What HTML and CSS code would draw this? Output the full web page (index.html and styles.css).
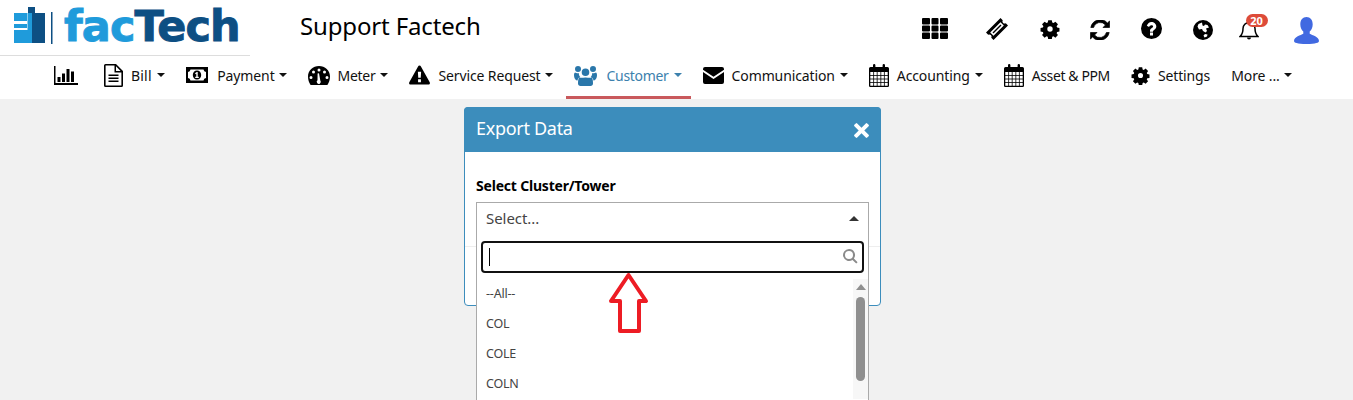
FILE: index.html
```html
<!DOCTYPE html>
<html lang="en">
<head>
<meta charset="utf-8">
<title>Support Factech</title>
<link rel="stylesheet" href="styles.css">
</head>
<body>
<svg class="defs" width="0" height="0" aria-hidden="true">
  <symbol id="i-cog" viewBox="0 0 24 24"><path fill-rule="evenodd" d="M9.600 1h4.800l.6 3.100 1.600.7 2.600-1.800 3.400 3.400-1.800 2.600.7 1.600 3.100.6v4.800l-3.100.6-.7 1.600 1.800 2.600-3.400 3.400-2.600-1.800-1.600.7-.6 3.100H9.600L9 23.100 7.400 22.400 4.800 24.200 1.400 20.800 3.200 18.200 2.500 16.600-.6 16V11.200L2.500 10.600 3.200 9 1.400 6.400 4.800 3 7.400 4.800 9 4.100zM12 9a3.600 3.600 0 1 0 0 7.200A3.600 3.600 0 0 0 12 9z" transform="translate(1.200 .6) scale(.9)"/></symbol>
  <symbol id="i-cal" viewBox="0 0 20 23"><path d="M1.500 3H4V1.200a1.200 1.200 0 0 1 2.400 0V3h7.200V1.200a1.200 1.200 0 0 1 2.400 0V3h2.500A1.500 1.500 0 0 1 20 4.500V8H0V4.500A1.500 1.500 0 0 1 1.500 3z"/><path fill="none" stroke="#000" stroke-width="1.300" d="M.65 7v14.700a.65.650 0 0 0 .65.650h17.400a.65.650 0 0 0 .65-.65V7"/><path fill="none" stroke="#000" stroke-width=".8" d="M1 11.500h18M1 15h18M1 18.500h18M4.600 8v14M8.200 8v14M11.800 8v14M15.400 8v14"/></symbol>
</svg>

<header class="topbar">
  <div class="brand">
    <svg class="brand-mark" viewBox="0 0 40 38" aria-hidden="true">
      <path fill="#1f9bdb" d="M0 6h13v8H0zM0 17h13v4H0zM0 23h14v13H0zM13.500 6H18v30h-4.500z"/>
      <path fill="#0d4f83" d="M14 0h7v6h10v30H18V6h-4z"/>
      <path fill="#0d4f83" d="M37 5h1.500v32H37z"/>
    </svg>
    <span class="brand-name"><span class="brand-fac">fac</span><span class="brand-tech">Tech</span></span>
  </div>
  <h1 class="page-title">Support Factech</h1>
  <div class="tools">
    <svg class="tool tool-grid" viewBox="0 0 26 21" aria-hidden="true"><path d="M0 1a1 1 0 0 1 1-1h6a1 1 0 0 1 1 1v4.500a1 1 0 0 1-1 1H1a1 1 0 0 1-1-1zM9.500 1a1 1 0 0 1 1-1h5a1 1 0 0 1 1 1v4.500a1 1 0 0 1-1 1h-5a1 1 0 0 1-1-1zM18 1a1 1 0 0 1 1-1h6a1 1 0 0 1 1 1v4.500a1 1 0 0 1-1 1h-6a1 1 0 0 1-1-1zM0 8.500a1 1 0 0 1 1-1h6a1 1 0 0 1 1 1v4a1 1 0 0 1-1 1H1a1 1 0 0 1-1-1zM9.500 8.500a1 1 0 0 1 1-1h5a1 1 0 0 1 1 1v4a1 1 0 0 1-1 1h-5a1 1 0 0 1-1-1zM18 8.500a1 1 0 0 1 1-1h6a1 1 0 0 1 1 1v4a1 1 0 0 1-1 1h-6a1 1 0 0 1-1-1zM0 15.500a1 1 0 0 1 1-1h6a1 1 0 0 1 1 1V20a1 1 0 0 1-1 1H1a1 1 0 0 1-1-1zM9.500 15.500a1 1 0 0 1 1-1h5a1 1 0 0 1 1 1V20a1 1 0 0 1-1 1h-5a1 1 0 0 1-1-1zM18 15.500a1 1 0 0 1 1-1h6a1 1 0 0 1 1 1V20a1 1 0 0 1-1 1h-6a1 1 0 0 1-1-1z"/></svg>
    <svg class="tool tool-ticket" viewBox="0 0 22 22" aria-hidden="true"><path fill-rule="evenodd" d="M14.500 0l2.200 2.200a2.300 2.300 0 0 0 3.100 3.100L22 7.500 7.500 22l-2.200-2.200a2.300 2.300 0 0 0-3.100-3.100L0 14.500zM14.500 4.200L4.200 14.500l3.300 3.300L17.800 7.500z"/><path d="M14.500 6.500l1 1-8 8-1-1z"/></svg>
    <svg class="tool tool-cog"><use href="#i-cog"/></svg>
    <svg class="tool tool-refresh" viewBox="0 0 20 20" aria-hidden="true"><path stroke="#000" stroke-width=".7" d="M19.500 1v6.500H13l2.500-2.500A6.800 6.800 0 0 0 3.600 7.500H.8A9.600 9.600 0 0 1 17.400 3zM.5 19v-6.500H7L4.500 15a6.800 6.800 0 0 0 11.900-2.500h2.800A9.600 9.600 0 0 1 2.600 17z"/></svg>
    <svg class="tool tool-help" viewBox="0 0 21 21" aria-hidden="true"><path fill-rule="evenodd" d="M10.500 0a10.500 10.500 0 1 1 0 21 10.500 10.500 0 0 1 0-21zM9 14.500V17.500h3v-3zM5.800 7.700l2.300 1.300c.4-1 1.200-1.700 2.300-1.700 1 0 1.700.5 1.700 1.300 0 1.500-3.100 1.800-3.100 4.500v.6h3v-.4c0-1.500 3.300-2 3.300-4.900C15.300 5.900 13 4 10.400 4 8.300 4 6.700 5.500 5.800 7.700z"/></svg>
    <svg class="tool tool-globe" viewBox="0 0 20 20" aria-hidden="true"><path fill-rule="evenodd" d="M10 0a10 10 0 1 1 0 20 10 10 0 0 1 0-20zM9 2.500L5.500 4 4.500 6.500 6 9.500 9 9 10 11l2.500 1.500L14 11 13 8.500l3-1L14.500 5 12 4.500 11 6 9.500 5.500zM12 14l-1.500 1.500 1 2 2.500-1 .5-2z"/></svg>
    <span class="tool-bell">
      <svg class="bell" viewBox="0 0 20 22" aria-hidden="true"><path fill="none" stroke="#000" stroke-width="1.500" d="M1 17.500c2.200-2 3-4 3-8a6 6 0 0 1 12 0c0 4 .8 6 3 8z"/><path d="M8 18.500h4a2 2 0 0 1-4 0zM9 1h2v3H9z"/></svg>
      <span class="badge">20</span>
    </span>
    <svg class="tool tool-user" viewBox="0 0 25 27" aria-hidden="true"><path fill="#4169e1" d="M12.500 0c3.800 0 6.200 3 6.200 7.200 0 3-1.200 5.800-3 7.300v2.300c2.500 1.400 9.300 3 9.300 7.200 0 1.600-3 3-12.500 3S0 25.600 0 24c0-4.200 6.800-5.800 9.300-7.200v-2.300c-1.800-1.500-3-4.300-3-7.300C6.300 3 8.700 0 12.500 0z"/></svg>
  </div>
</header>

<nav class="menu">
  <a class="menu-item menu-home"><svg class="ic ic-chart" viewBox="0 0 24 19" aria-hidden="true"><path d="M0 0h1.500v17H24v2H0zM3.500 11h3v5h-3zM8 7.500h3V16H8zM12.500 3h3v13h-3zM17 5.500h3V16h-3z"/></svg></a>
  <a class="menu-item item-bill"><svg class="ic ic-file" viewBox="0 0 19 23" aria-hidden="true"><path fill-rule="evenodd" d="M1.500 0H12l7 7v14.500a1.500 1.500 0 0 1-1.500 1.500h-16A1.500 1.500 0 0 1 0 21.500v-20A1.500 1.500 0 0 1 1.500 0zM1.600 1.600v19.800h15.800V8.500H10.500V1.600zM12 2.300v4.600h4.600zM4.500 10.500h10V12h-10zM4.500 13.500h10V15h-10zM4.500 16.500h10V18h-10z"/></svg><span>Bill</span><i class="caret"></i></a>
  <a class="menu-item item-payment"><svg class="ic ic-money" viewBox="0 0 22 16" aria-hidden="true"><path fill-rule="evenodd" d="M0 0h22v16H0zM4.500 2.500A3 3 0 0 1 2 5v6a3 3 0 0 1 2.500 2.500h13A3 3 0 0 1 20 11V5a3 3 0 0 1-2.500-2.500zM11 3.500c2.500 0 4.200 2 4.200 4.500s-1.700 4.500-4.200 4.500S6.800 10.500 6.800 8 8.500 3.500 11 3.500zM10.800 5L9 6.300l.7 1 .6-.5v3H9.200v1.200h3.600v-1.200h-1.100V5z"/></svg><span>Payment</span><i class="caret"></i></a>
  <a class="menu-item item-meter"><svg class="ic ic-gauge" viewBox="0 0 22 19" aria-hidden="true"><path fill-rule="evenodd" d="M11 0c6 0 11 4.500 11 10.500 0 3-.9 6-2.600 8.500H2.600C.9 16.500 0 13.500 0 10.500 0 4.500 5 0 11 0zM11 2.500a1.500 1.500 0 1 0 0 3 1.500 1.500 0 0 0 0-3zM5.500 4.500a1.500 1.500 0 1 0 0 3 1.500 1.500 0 0 0 0-3zM16.500 4.500a1.500 1.500 0 1 0 0 3 1.500 1.500 0 0 0 0-3zM3 10a1.500 1.500 0 1 0 0 3 1.500 1.500 0 0 0 0-3zM19 10a1.500 1.500 0 1 0 0 3 1.500 1.500 0 0 0 0-3zM9.600 7.500l-.1 6.800a2 2 0 1 0 2.800.3L11 7.300z"/></svg><span>Meter</span><i class="caret"></i></a>
  <a class="menu-item"><svg class="ic ic-warn" viewBox="0 0 22 20" aria-hidden="true"><path fill-rule="evenodd" d="M11 0c.7 0 1.200.4 1.500 1l9.200 16.700c.6 1.100-.1 2.300-1.400 2.300H1.700C.4 20-.3 18.800.3 17.700L9.500 1c.3-.6.8-1 1.500-1zM9.300 6.500l.4 6.500h2.600l.4-6.500zM9.500 14.500v3h3v-3z"/></svg><span>Service Request</span><i class="caret"></i></a>
  <a class="menu-item is-active"><svg class="ic ic-users" viewBox="0 0 23 21" aria-hidden="true"><path d="M11.500 3.500a3.800 3.800 0 1 1 0 7.600 3.800 3.800 0 0 1 0-7.600zM4 1a3 3 0 1 1 0 6 3 3 0 0 1 0-6zM19 1a3 3 0 1 1 0 6 3 3 0 0 1 0-6zM5.500 12.500c1.200.8 3.500 0 6 0s4.800.8 6 0c1.400.8 1.500 4 1.500 6 0 1.500-1 2.500-2.500 2.500h-10C5 21 4 20 4 18.500c0-2 .1-5.200 1.500-6zM0 10c0-1 .3-2 1-2.500 1 .7 2.500.9 3.800.5-.1 1.500.5 3 1.500 4-1.300.3-2.500 1.500-2.800 3.500C1.500 15.500 0 13 0 10zM23 10c0-1-.3-2-1-2.500-1 .7-2.500.9-3.800.5.100 1.500-.5 3-1.500 4 1.300.3 2.500 1.500 2.800 3.500C21.500 15.500 23 13 23 10z"/></svg><span>Customer</span><i class="caret"></i></a>
  <a class="menu-item"><svg class="ic ic-mail" viewBox="0 0 21 17" aria-hidden="true"><path d="M2 0h17a2 2 0 0 1 2 2v.8l-10.500 7L0 2.800V2a2 2 0 0 1 2-2zM0 5l10.500 7L21 5v10a2 2 0 0 1-2 2H2a2 2 0 0 1-2-2z"/></svg><span>Communication</span><i class="caret"></i></a>
  <a class="menu-item"><svg class="ic ic-cal"><use href="#i-cal"/></svg><span>Accounting</span><i class="caret"></i></a>
  <a class="menu-item item-asset"><svg class="ic ic-cal"><use href="#i-cal"/></svg><span>Asset &amp; PPM</span></a>
  <a class="menu-item"><svg class="ic ic-cog"><use href="#i-cog"/></svg><span>Settings</span></a>
  <a class="menu-item item-more"><span>More ...</span><i class="caret"></i></a>
</nav>

<main class="stage">
  <section class="modal">
    <div class="modal-head">
      <h2 class="modal-title">Export Data</h2>
      <svg class="modal-close" viewBox="0 0 15 15" aria-hidden="true"><path d="M3.200.4L7.500 4.700 11.800.4a1 1 0 0 1 1.400 0l1.400 1.400a1 1 0 0 1 0 1.400L10.300 7.500l4.300 4.300a1 1 0 0 1 0 1.400l-1.400 1.400a1 1 0 0 1-1.400 0L7.500 10.300 3.200 14.600a1 1 0 0 1-1.400 0L.4 13.200a1 1 0 0 1 0-1.400L4.700 7.500.4 3.200a1 1 0 0 1 0-1.400L1.800.4a1 1 0 0 1 1.400 0z"/></svg>
    </div>
    <div class="modal-body">
      <label class="field-label">Select Cluster/Tower</label>
      <div class="select">
        <div class="select-value"><span>Select...</span><i class="caret-up"></i></div>
        <div class="dropdown">
          <div class="search">
            <span class="text-cursor"></span>
            <svg class="search-icon" viewBox="0 0 15 15" aria-hidden="true"><path fill-rule="evenodd" d="M6 0a6 6 0 0 1 4.900 9.500l3.700 3.700-1.400 1.400-3.700-3.700A6 6 0 1 1 6 0zM6 2a4 4 0 1 0 0 8 4 4 0 0 0 0-8z"/></svg>
          </div>
          <div class="options">
            <ul class="option-list">
              <li>--All--</li>
              <li>COL</li>
              <li>COLE</li>
              <li>COLN</li>
            </ul>
            <div class="scrollbar"><i class="scroll-up"></i><i class="scroll-thumb"></i></div>
          </div>
        </div>
      </div>
    </div>
    <div class="modal-foot"></div>
  </section>
  <svg class="red-arrow" viewBox="0 0 41 62" aria-hidden="true"><path fill="#fff" stroke="#ed1c24" stroke-width="4" stroke-linejoin="round" d="M20.500 3L38 29H31V59H12V29H3z"/></svg>
</main>
</body>
</html>
```

FILE: styles.css
```css
html, body { margin: 0; padding: 0; height: 400px; overflow: hidden; }
body { background: #f1f1f1; font-family: "Noto Sans", "Liberation Sans", sans-serif; color: #000; }
.defs { display: block; height: 0; }

.topbar { display: flex; align-items: flex-start; height: 56px; background: #fff; }
.brand { display: flex; align-items: flex-start; width: 250px; height: 55px; border-bottom: 1px solid #ddd; box-sizing: content-box; }
.brand-mark { width: 40px; height: 38px; margin: 7px 0 0 14px; flex: none; }
.brand-name { font: bold 43px/1 "DejaVu Sans", sans-serif; letter-spacing: -.9px; margin: 5px 0 0 10px; -webkit-text-stroke: .9px currentColor; white-space: nowrap; }
.brand-fac { color: #1f9bdb; }
.brand-tech { color: #0d4f83; }
.page-title { margin: 8px 0 0 50px; font-size: 24px; font-weight: 400; line-height: 36px; letter-spacing: -.15px; white-space: nowrap; }

.tools { display: flex; align-items: flex-start; margin-left: 441px; padding-top: 18px; }
.tool { display: block; flex: none; fill: #000; }
.tool-grid { width: 26px; height: 21px; }
.tool-ticket { width: 22px; height: 22px; margin-left: 38px; }
.tool-cog { width: 20px; height: 20px; margin-left: 32px; margin-top: 1px; }
.tool-refresh { width: 20px; height: 20px; margin-left: 30px; margin-top: 2px; }
.tool-help { width: 21px; height: 21px; margin-left: 31px; }
.tool-globe { width: 20px; height: 20px; margin-left: 31px; margin-top: 2px; }
.tool-bell { display: block; position: relative; width: 20px; height: 22px; margin-left: 26px; margin-top: 1px; }
.bell { display: block; width: 20px; height: 22px; }
.badge { position: absolute; left: 7px; top: -5px; width: 22px; height: 13px; border-radius: 7px; background: #dd4b39; color: #fff; font-size: 11px; font-weight: 700; line-height: 13px; text-align: center; }
.tool-user { width: 25px; height: 27px; margin-left: 35px; margin-top: -1px; }

.menu { display: flex; align-items: stretch; gap: 4px; height: 43px; padding-left: 46px; background: #fff; box-sizing: border-box; }
.menu-item { display: flex; align-items: center; height: 43px; box-sizing: border-box; padding: 0 9px 5px 8px; font-size: 14px; letter-spacing: -.12px; color: #111; white-space: nowrap; }
.menu-item > span { margin-left: 8px; }
.menu-item > span:first-child { margin-left: 0; }
.menu-home { padding-right: 14px; }
.item-bill { letter-spacing: .2px; }
.item-payment .ic { margin-right: 1.500px; }
.item-payment .caret { margin-left: 4px; }
.item-meter { letter-spacing: -.3px; }
.item-asset { letter-spacing: -.39px; }
.item-more .caret { margin-left: 4px; }
.is-active { color: #3c81ad; padding-bottom: 2px; letter-spacing: -.3px; border-bottom: 3px solid #c9595c; }
.is-active .caret { border-top-color: #3c81ad; }
.is-active .ic { fill: #2a77aa; margin-right: 1px; }
.caret { display: block; width: 0; height: 0; margin-left: 5px; border-top: 4px solid #111; border-left: 4px solid transparent; border-right: 4px solid transparent; }
.ic { display: block; flex: none; fill: #000; }
.ic-chart { width: 24px; height: 19px; }
.ic-file { width: 19px; height: 23px; }
.ic-money { width: 22px; height: 16px; }
.ic-gauge { width: 22px; height: 19px; }
.ic-warn { width: 21px; height: 20px; }
.ic-users { width: 23px; height: 21px; }
.ic-mail { width: 21px; height: 17px; }
.ic-cal { width: 20px; height: 23px; }
.ic-cog { width: 19px; height: 19px; }

.stage { position: relative; display: flex; justify-content: center; padding: 8px 8px 0 0; }
.modal { width: 417px; height: 199px; box-sizing: border-box; border: 1px solid #3c8dbc; border-radius: 4px; background: #fff; flex: none; display: flex; flex-direction: column; }
.modal-head { display: flex; align-items: center; justify-content: space-between; height: 45px; margin: -1px -1px 0; padding: 0 12px; background: #3c8dbc; border-radius: 4px 4px 0 0; flex: none; }
.modal-title { margin: 0 0 4px; font-size: 18px; font-weight: 400; color: #fff; letter-spacing: -.3px; }
.modal-close { width: 15px; height: 15px; fill: #fff; margin-top: 2px; }
.modal-body { height: 94px; box-sizing: border-box; padding: 25px 11px 0; flex: none; }
.field-label { display: block; font-size: 14px; font-weight: 700; line-height: 18px; letter-spacing: -.2px; margin-bottom: 7px; }
.select { position: relative; }
.select-value { display: flex; align-items: center; justify-content: space-between; height: 31px; box-sizing: border-box; padding: 0 9px; border: 1px solid #aaa; border-bottom: 0; font-size: 15px; color: #444; letter-spacing: -.05px; background: #fff; }
.caret-up { display: block; width: 0; height: 0; border-bottom: 5px solid #333; border-left: 5px solid transparent; border-right: 5px solid transparent; }
.dropdown { position: absolute; left: 0; right: 0; top: 31px; height: 180px; box-sizing: border-box; background: #fff; border: 1px solid #aaa; border-width: 0 1px; padding: 8px 4px 0; }
.search { position: relative; height: 32px; box-sizing: border-box; border: 2px solid #111; border-radius: 4px; background: #fff; }
.text-cursor { position: absolute; left: 6px; top: 5px; width: 1px; height: 18px; background: #000; }
.search-icon { position: absolute; right: 4px; top: 6px; width: 15px; height: 15px; fill: #8a8a8a; }
.options { position: relative; margin: 6px -4px 0; }
.option-list { list-style: none; margin: 0; padding: 0 0 0 9px; }
.option-list li { height: 30px; line-height: 30px; font-size: 12.500px; color: #444; letter-spacing: -.2px; }
.scrollbar { position: absolute; right: 0; top: 0; bottom: 0; width: 15px; background: #f7f7f7; }
.scroll-up { position: absolute; left: 3px; top: 5px; width: 0; height: 0; border-bottom: 6px solid #8f8f8f; border-left: 5px solid transparent; border-right: 5px solid transparent; }
.scroll-thumb { position: absolute; left: 3px; top: 18px; width: 9px; height: 84px; border-radius: 5px; background: #8f8f8f; }
.modal-foot { flex: 1; border-top: 1px solid #eee; }
.red-arrow { position: absolute; left: 608px; top: 173px; width: 41px; height: 62px; }
```
